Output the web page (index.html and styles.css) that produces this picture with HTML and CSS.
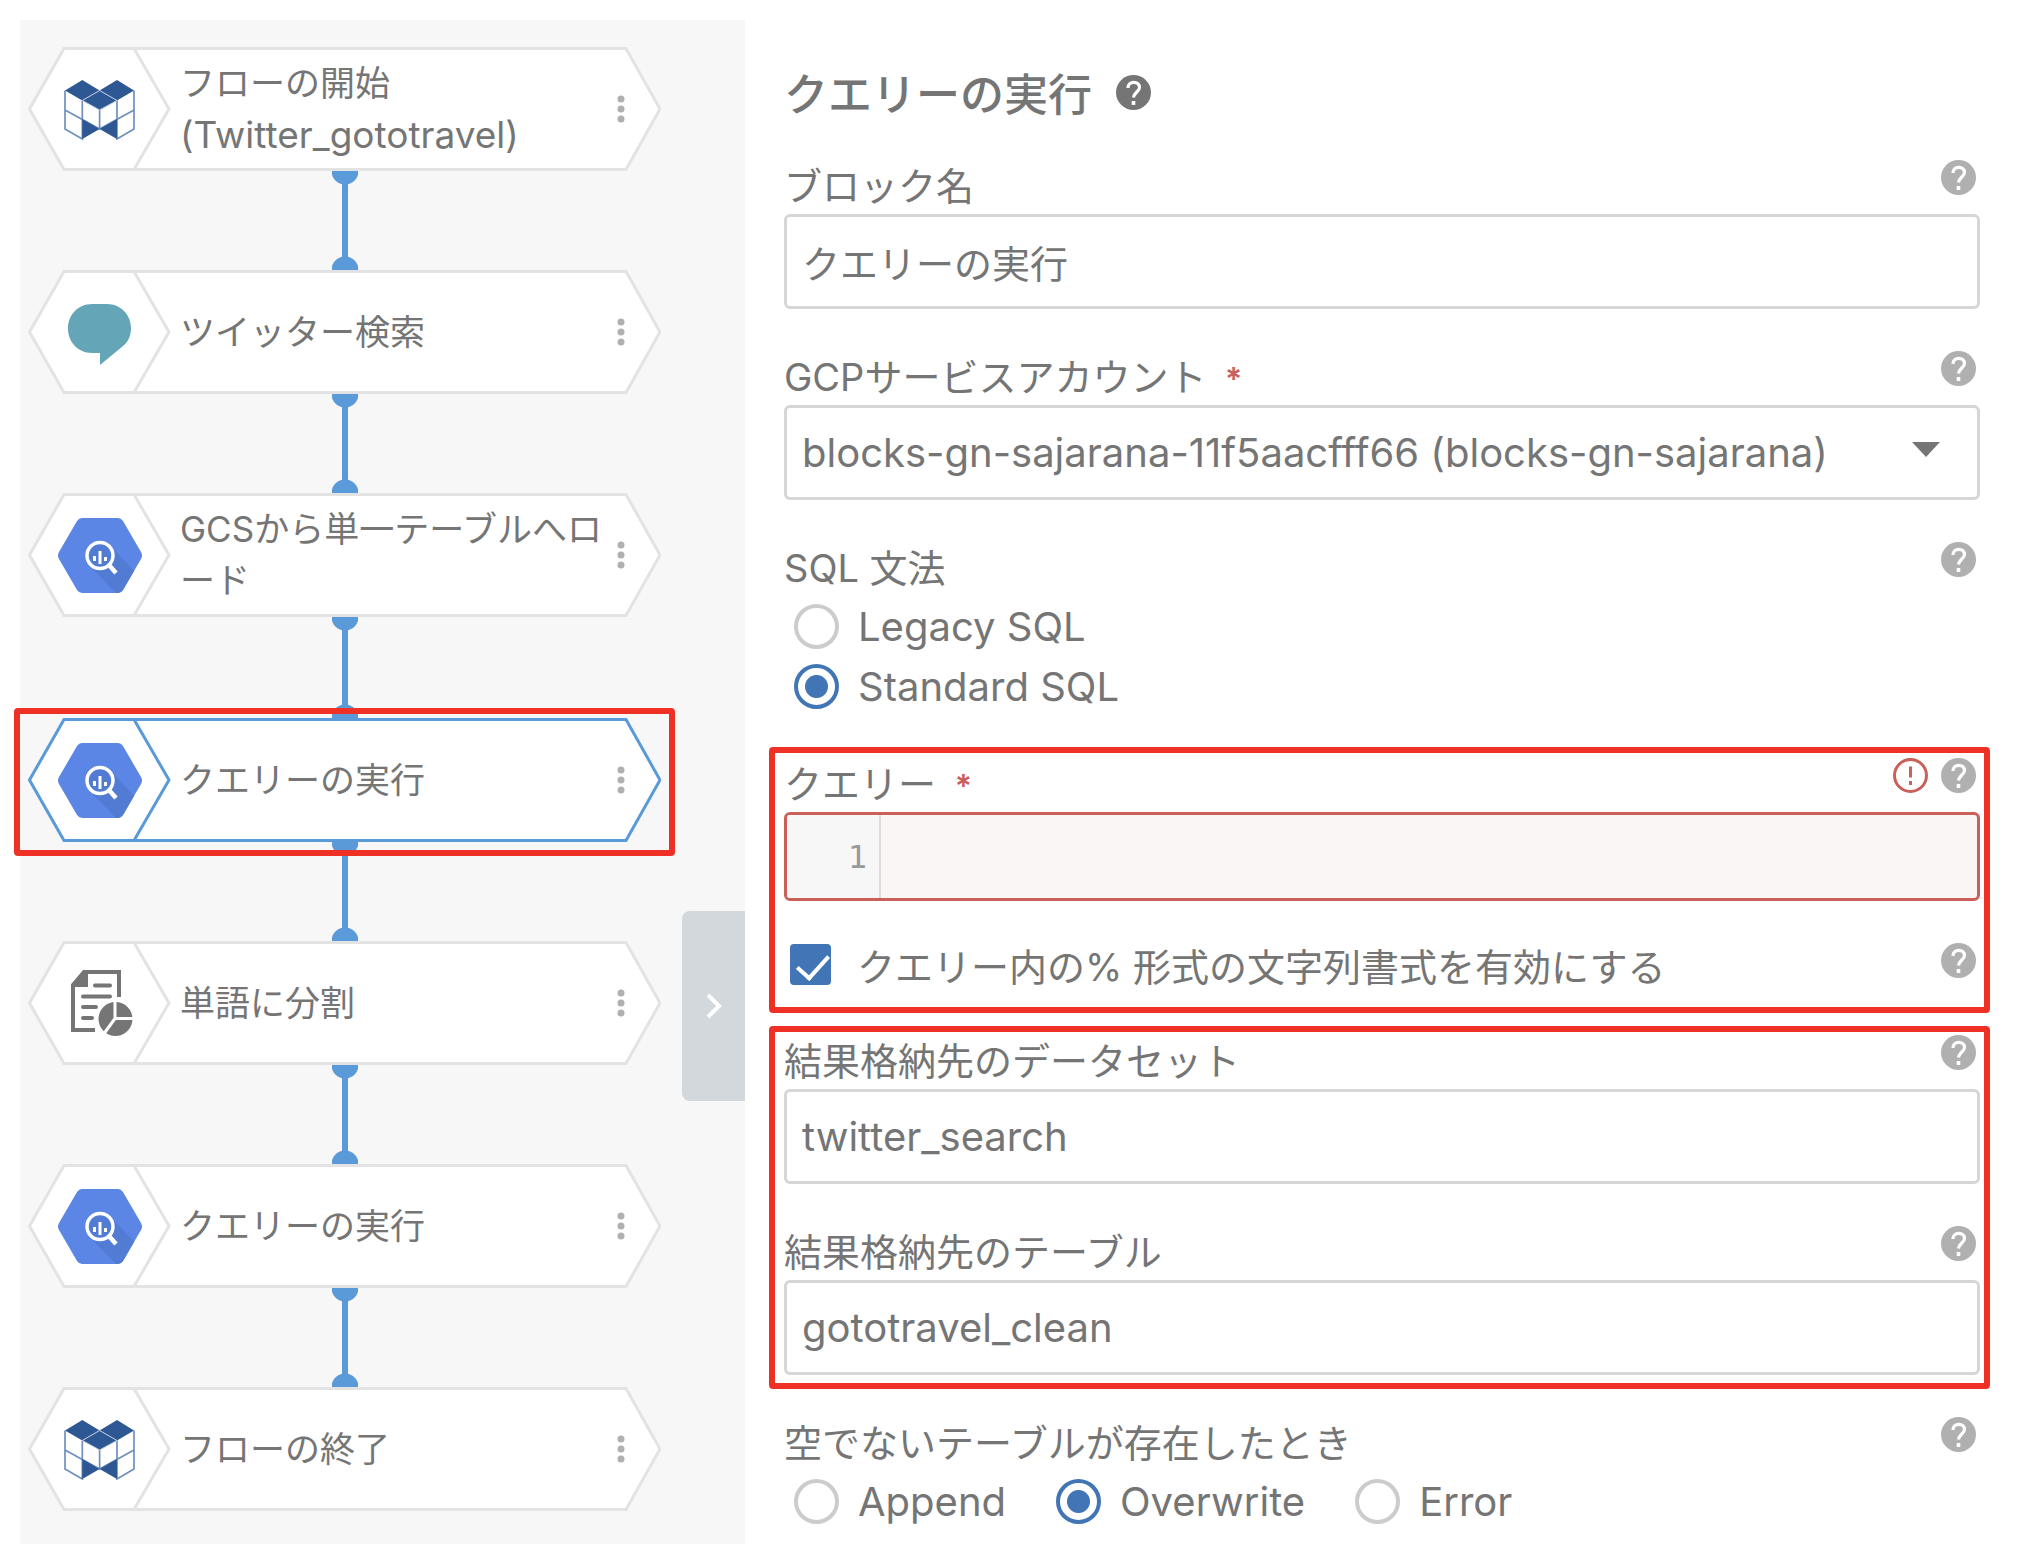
FILE: index.html
```html
<!DOCTYPE html>
<html lang="ja">
<head>
    <meta charset="UTF-8" />
    <meta name="viewport" content="width=device-width, initial-scale=1.0" />
    <title>クエリーの実行</title>
    <link rel="stylesheet" href="styles.css">
</head>
<body>
    <!-- アイコン定義 -->
    <svg class="sprite" aria-hidden="true">
        <symbol id="shape" viewBox="0 0 633 124">
            <path d="M36 1.5H598L632 62L598 122.5H36L1.500 62Z" fill="#fff" stroke="currentColor" stroke-width="3" />
            <path d="M106 1.5L141 62L106 122.5" fill="none" stroke="currentColor" stroke-width="3" />
        </symbol>
        <symbol id="icon-blocks" viewBox="-1 -1 71 61">
            <path d="M0 10.5V49L17.3 59V20.5M0 30L34.6 49L69 30M34.6 30V49M52 20.5V59L69 49V10.5" fill="none" stroke="#6f90bf" stroke-width="1.7" />
            <path d="M0 10.5L17.3 0L34.6 10.5L17.3 20.5ZM34.6 10.5L52 0L69 10.5L52 20.5ZM17.3 39L34.6 49L17.3 59ZM52 39L34.6 49L52 59Z" fill="#2d5894" />
            <path d="M17.3 20.5L34.6 10.5L52 20.5L34.6 30Z" fill="#2d5894" stroke="#c3d0e2" stroke-width="1" />
        </symbol>
        <symbol id="icon-tweet" viewBox="0 0 63 65">
            <path d="M24 4H39C53 4 63 15 63 28C63 36 60 42 55 46L32 65V53H24C10 53 0 42 0 28.500C0 15 10 4 24 4Z" fill="#64a5b8" />
        </symbol>
        <symbol id="icon-bigquery" viewBox="0 0 84 75">
            <path d="M24 0H60Q63 0 65 3L83 34Q85 37.500 83 41L65 72Q63 75 60 75H24Q21 75 19 72L1 41Q-1 37.500 1 34L19 3Q21 0 24 0Z" fill="#5b86e5" />
            <path d="M53 28L76 53L65 72Q63 75 60 75H58L30 46Z" fill="#527bd4" />
            <circle cx="42" cy="37.500" r="13" fill="#527bd4" stroke="#fff" stroke-width="3.500" />
            <path d="M50 46L58 55" stroke="#fff" stroke-width="4.500" />
            <path d="M36.500 38V43M42 33V46M47.500 39V43" stroke="#fff" stroke-width="3" />
        </symbol>
        <symbol id="icon-split" viewBox="0 0 66 66">
            <path d="M28 60H6V15L17 2H52V27" fill="none" stroke="#757575" stroke-width="4" />
            <path d="M5 17L18 1L21 3V17Z" fill="#757575" />
            <path d="M28 15.500H43M16 26.500H43M16 37H29M16 48H25" stroke="#757575" stroke-width="4" stroke-linecap="round" />
            <circle cx="48.500" cy="49" r="17" fill="#757575" />
            <path d="M48 30V48.500H66M48 48.500L36 65" fill="none" stroke="#fff" stroke-width="3" />
        </symbol>
        <symbol id="icon-dots" viewBox="0 0 8 28">
            <circle cx="4" cy="4" r="3.500" /><circle cx="4" cy="14" r="3.500" /><circle cx="4" cy="24" r="3.500" />
        </symbol>
        <symbol id="icon-help" viewBox="0 0 35 35">
            <circle cx="17.500" cy="17.500" r="17.500" fill="currentColor" />
            <path d="M12 13C12 5.500 23.500 5.500 23.500 12.500C23.500 16.500 18 17.500 17.500 22.500" fill="none" stroke="#fff" stroke-width="3.200" />
            <path d="M17.500 26V30" stroke="#fff" stroke-width="3.600" />
        </symbol>
        <symbol id="icon-alert" viewBox="0 0 35 35">
            <circle cx="17.500" cy="17.500" r="16" fill="none" stroke="currentColor" stroke-width="3" />
            <path d="M17.500 8.500V19.500M17.500 23V27" stroke="currentColor" stroke-width="3" />
        </symbol>
    </svg>

    <main class="editor">
        <section class="flow">
            <div class="node">
                <svg class="node-shape"><use href="#shape" /></svg>
                <span class="node-icon"><svg width="71" height="61"><use href="#icon-blocks" /></svg></span>
                <p class="node-name">フローの開始<br><span class="node-target">(Twitter_gototravel)</span></p>
                <button type="button" class="node-menu" aria-label="メニュー"><svg width="8" height="28"><use href="#icon-dots" /></svg></button>
            </div>
            <div class="connector"></div>
            <div class="node">
                <svg class="node-shape"><use href="#shape" /></svg>
                <span class="node-icon"><svg width="63" height="65"><use href="#icon-tweet" /></svg></span>
                <p class="node-name">ツイッター検索</p>
                <button type="button" class="node-menu" aria-label="メニュー"><svg width="8" height="28"><use href="#icon-dots" /></svg></button>
            </div>
            <div class="connector"></div>
            <div class="node">
                <svg class="node-shape"><use href="#shape" /></svg>
                <span class="node-icon"><svg width="84" height="75"><use href="#icon-bigquery" /></svg></span>
                <p class="node-name">GCSから単一テーブルへロード</p>
                <button type="button" class="node-menu" aria-label="メニュー"><svg width="8" height="28"><use href="#icon-dots" /></svg></button>
            </div>
            <div class="connector connector-active"></div>
            <div class="node node-active marked">
                <svg class="node-shape"><use href="#shape" /></svg>
                <span class="node-icon"><svg width="84" height="75"><use href="#icon-bigquery" /></svg></span>
                <p class="node-name">クエリーの実行</p>
                <button type="button" class="node-menu" aria-label="メニュー"><svg width="8" height="28"><use href="#icon-dots" /></svg></button>
            </div>
            <div class="connector"></div>
            <div class="node">
                <svg class="node-shape"><use href="#shape" /></svg>
                <span class="node-icon"><svg width="66" height="66"><use href="#icon-split" /></svg></span>
                <p class="node-name">単語に分割</p>
                <button type="button" class="node-menu" aria-label="メニュー"><svg width="8" height="28"><use href="#icon-dots" /></svg></button>
            </div>
            <div class="connector"></div>
            <div class="node">
                <svg class="node-shape"><use href="#shape" /></svg>
                <span class="node-icon"><svg width="84" height="75"><use href="#icon-bigquery" /></svg></span>
                <p class="node-name">クエリーの実行</p>
                <button type="button" class="node-menu" aria-label="メニュー"><svg width="8" height="28"><use href="#icon-dots" /></svg></button>
            </div>
            <div class="connector"></div>
            <div class="node">
                <svg class="node-shape"><use href="#shape" /></svg>
                <span class="node-icon"><svg width="71" height="61"><use href="#icon-blocks" /></svg></span>
                <p class="node-name">フローの終了</p>
                <button type="button" class="node-menu" aria-label="メニュー"><svg width="8" height="28"><use href="#icon-dots" /></svg></button>
            </div>

            <button type="button" class="toggle" aria-label="パネルを閉じる">
                <svg width="16" height="26" viewBox="0 0 16 26"><path d="M2 2L13 13L2 24" fill="none" stroke="#fff" stroke-width="4" /></svg>
            </button>
        </section>

        <form class="props">
            <h1 class="title">クエリーの実行 <button type="button" class="help help-dark" aria-label="ヘルプ"><svg><use href="#icon-help" /></svg></button></h1>

            <div class="field">
                <div class="field-head">
                    <label for="block-name">ブロック名</label>
                    <button type="button" class="help" aria-label="ヘルプ"><svg><use href="#icon-help" /></svg></button>
                </div>
                <input type="text" id="block-name" class="input" value="クエリーの実行" />
            </div>

            <div class="field">
                <div class="field-head">
                    <label for="account">GCPサービスアカウント <span class="required">*</span></label>
                    <button type="button" class="help" aria-label="ヘルプ"><svg><use href="#icon-help" /></svg></button>
                </div>
                <div class="select">
                    <select id="account" class="input latin">
                        <option>blocks-gn-sajarana-11f5aacfff66 (blocks-gn-sajarana)</option>
                    </select>
                </div>
            </div>

            <div class="field" role="radiogroup" aria-labelledby="syntax-label">
                <div class="field-head">
                    <span id="syntax-label">SQL 文法</span>
                    <button type="button" class="help" aria-label="ヘルプ"><svg><use href="#icon-help" /></svg></button>
                </div>
                <label class="choice latin"><input type="radio" name="syntax" />Legacy SQL</label>
                <label class="choice latin"><input type="radio" name="syntax" checked />Standard SQL</label>
            </div>

            <div class="group marked">
                <div class="field">
                    <div class="field-head">
                        <label for="query">クエリー <span class="required">*</span></label>
                        <svg class="alert"><use href="#icon-alert" /></svg>
                        <button type="button" class="help" aria-label="ヘルプ"><svg><use href="#icon-help" /></svg></button>
                    </div>
                    <div class="code">
                        <span class="line-no">1</span>
                        <textarea id="query" rows="1"></textarea>
                    </div>
                </div>
                <div class="check-row">
                    <label class="check"><input type="checkbox" checked />クエリー内の% 形式の文字列書式を有効にする</label>
                    <button type="button" class="help" aria-label="ヘルプ"><svg><use href="#icon-help" /></svg></button>
                </div>
            </div>

            <div class="group group-dest marked">
                <div class="field">
                    <div class="field-head">
                        <label for="dataset">結果格納先のデータセット</label>
                        <button type="button" class="help" aria-label="ヘルプ"><svg><use href="#icon-help" /></svg></button>
                    </div>
                    <input type="text" id="dataset" class="input latin" value="twitter_search" />
                </div>
                <div class="field">
                    <div class="field-head">
                        <label for="table">結果格納先のテーブル</label>
                        <button type="button" class="help" aria-label="ヘルプ"><svg><use href="#icon-help" /></svg></button>
                    </div>
                    <input type="text" id="table" class="input latin" value="gototravel_clean" />
                </div>
            </div>

            <div class="field" role="radiogroup" aria-labelledby="exists-label">
                <div class="field-head">
                    <span id="exists-label">空でないテーブルが存在したとき</span>
                    <button type="button" class="help" aria-label="ヘルプ"><svg><use href="#icon-help" /></svg></button>
                </div>
                <div class="choices">
                    <label class="choice latin"><input type="radio" name="exists" />Append</label>
                    <label class="choice latin"><input type="radio" name="exists" checked />Overwrite</label>
                    <label class="choice latin"><input type="radio" name="exists" />Error</label>
                </div>
            </div>
        </form>
    </main>
</body>
</html>
```
FILE: styles.css
```css
* {
    box-sizing: border-box;
}
body {
    margin: 0;
    padding: 20px 40px 18px 20px;
    font-family: Inter, "Noto Sans CJK JP", sans-serif;
    font-size: 38px;
    color: #757575;
    background-color: #fff;
}
button {
    padding: 0;
    border: none;
    background: none;
    cursor: pointer;
}
svg {
    display: block;
}
.sprite {
    position: absolute;
    width: 0;
    height: 0;
}
.editor {
    display: grid;
    grid-template-columns: 725px 1fr;
    column-gap: 39px;
}

/* フロー */
.flow {
    position: relative;
    padding: 27px 8px 33px;
    background-color: #f7f7f7;
}
.node {
    position: relative;
    display: flex;
    align-items: center;
    width: 633px;
    height: 124px;
    color: #e3e3e3;
}
.node-active {
    color: #5b9ad9;
}
.node-shape {
    position: absolute;
    inset: 0;
    width: 100%;
    height: 100%;
}
.node-icon {
    position: relative;
    display: flex;
    justify-content: center;
    width: 143px;
}
.node-name {
    position: relative;
    width: 428px;
    margin: 0 0 0 9px;
    font-size: 35px;
    line-height: 51px;
    color: #757575;
}
.node-target {
    font-size: 37px;
}
.node-menu {
    position: relative;
    width: 26px;
    padding: 0 9px;
    fill: #b0b0b0;
}
.connector {
    width: 26px;
    height: 99px;
    margin-left: 304px;
    background:
        radial-gradient(circle at 13px 0, #5b9ad9 13px, transparent 14px),
        radial-gradient(circle at 13px 100%, #5b9ad9 13px, transparent 14px),
        linear-gradient(#5b9ad9, #5b9ad9) center / 6px 100% no-repeat;
}
.connector-active {
    height: 101px;
}
.toggle {
    position: absolute;
    top: 891px;
    right: 0;
    display: flex;
    justify-content: center;
    align-items: center;
    width: 63px;
    height: 190px;
    border-radius: 8px 0 0 8px;
    background-color: #d3d8dc;
}

/* 赤枠 */
.marked {
    position: relative;
}
.marked::after {
    content: "";
    position: absolute;
    inset: -6px -10px -20px -15px;
    border: 6px solid #ee3124;
    border-radius: 4px;
    pointer-events: none;
}
.node-active::after {
    inset: -10px -14px -14px;
}
.group-dest::after {
    inset: -4px -10px -14px -15px;
}

/* プロパティ */
.props {
    display: flex;
    flex-direction: column;
    gap: 37px;
}
.group {
    display: flex;
    flex-direction: column;
    gap: 37px;
}
.title {
    display: flex;
    align-items: center;
    gap: 24px;
    height: 52px;
    margin: 46px 0 0;
    font-size: 44px;
    font-weight: 500;
}
.field-head {
    display: flex;
    gap: 13px;
    height: 59px;
    padding: 5px 4px 0 0;
    line-height: 52px;
}
.field-head > :first-child {
    margin-right: auto;
}
.required {
    margin-left: 8px;
    font-size: 32px;
    font-weight: 600;
    color: #c9605a;
}
.help {
    width: 35px;
    height: 35px;
    color: #b0b0b0;
}
.help-dark {
    color: #757575;
}
.help svg,
.alert {
    width: 35px;
    height: 35px;
}
.alert {
    color: #c9605a;
}
.input {
    display: block;
    width: 100%;
    height: 95px;
    padding: 0 15px;
    border: 3px solid #d6d6d6;
    border-radius: 6px;
    font-family: inherit;
    font-size: 38px;
    color: #757575;
    background-color: #fff;
    appearance: none;
}
.latin {
    font-size: 40px;
}
.select {
    position: relative;
}
.select::after {
    content: "";
    position: absolute;
    top: 37px;
    right: 40px;
    border: 14px solid transparent;
    border-top: 15px solid #757575;
    border-bottom: none;
    pointer-events: none;
}
.choice {
    display: flex;
    align-items: center;
    gap: 19px;
    height: 60px;
    padding-left: 10px;
}
.choices {
    display: flex;
    gap: 40px;
}
.choice input {
    width: 45px;
    height: 45px;
    margin: 0;
    border: 4px solid #ccc;
    border-radius: 50%;
    appearance: none;
}
.choice input:checked {
    border-color: #4275b5;
    background: radial-gradient(circle, #4275b5 11px, #fff 12px);
}
.code {
    display: flex;
    height: 89px;
    border: 3px solid #c9605a;
    border-radius: 6px;
    overflow: hidden;
    background-color: #faf6f5;
}
.line-no {
    width: 94px;
    padding-right: 12px;
    border-right: 2px solid #ddd;
    font-family: "DejaVu Sans Mono", monospace;
    font-size: 32px;
    line-height: 84px;
    text-align: right;
    color: #999;
    background-color: #f7f7f7;
}
.code textarea {
    flex: 1;
    padding: 20px;
    border: none;
    outline: none;
    resize: none;
    font-family: "DejaVu Sans Mono", monospace;
    font-size: 32px;
    background: none;
}
.check-row {
    display: flex;
    justify-content: space-between;
    height: 55px;
    padding-right: 4px;
}
.check-row .help {
    margin-top: 5px;
}
.check {
    display: flex;
    align-items: center;
    gap: 26px;
    height: 52px;
    padding-left: 6px;
}
.check input {
    position: relative;
    width: 41px;
    height: 41px;
    margin: 0;
    border-radius: 4px;
    background-color: #4275b5;
    appearance: none;
}
.check input::after {
    content: "";
    position: absolute;
    top: 4px;
    left: 14px;
    width: 14px;
    height: 27px;
    border: solid #fff;
    border-width: 0 4px 4px 0;
    transform: rotate(42deg);
}
```
